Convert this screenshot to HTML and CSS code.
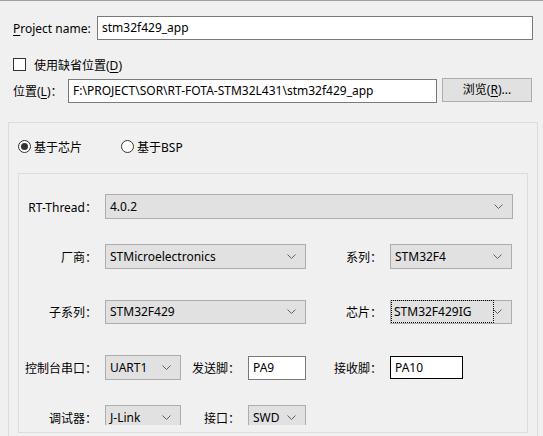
FILE: index.html
```html
<!DOCTYPE html>
<html lang="zh">
<head>
<meta charset="utf-8">
<title>New Project</title>
<link rel="stylesheet" href="styles.css">
</head>
<body>
<div class="window">
  <div class="row-name">
    <label class="lbl-name"><u>P</u>roject name:</label>
    <div class="input w-name">stm32f429_app</div>
  </div>
  <div class="row-check">
    <span class="checkbox"></span>
    <span class="check-text">使用缺省位置(<u>D</u>)</span>
  </div>
  <div class="row-path">
    <label class="lbl-path">位置(<u>L</u>)<span class="colon">：</span></label>
    <div class="input w-path">F:\PROJECT\SOR\RT-FOTA-STM32L431\stm32f429_app</div>
    <div class="button">浏览(<u>R</u>)...</div>
  </div>
  <div class="group">
    <div class="radios">
      <div class="radio-item first"><span class="radio checked"></span><span>基于芯片</span></div>
      <div class="radio-item"><span class="radio"></span><span>基于BSP</span></div>
    </div>
    <div class="panel">
      <div class="clip">
        <div class="frow r1">
          <span class="lab c1">RT-Thread<span class="colon">：</span></span>
          <div class="select w-rt"><span class="val">4.0.2</span><svg class="chev" width="9" height="5" viewBox="0 0 9 5"><polyline points="0.5,0.5 4.5,4.5 8.5,0.5" fill="none" stroke="#606060" stroke-width="1"/></svg></div>
        </div>
        <div class="frow r2">
          <span class="lab c1">厂商<span class="colon">：</span></span>
          <div class="select w-vendor"><span class="val">STMicroelectronics</span><svg class="chev" width="9" height="5" viewBox="0 0 9 5"><polyline points="0.5,0.5 4.5,4.5 8.5,0.5" fill="none" stroke="#606060" stroke-width="1"/></svg></div>
          <span class="lab c3">系列<span class="colon">：</span></span>
          <div class="select w-right"><span class="val">STM32F4</span><svg class="chev" width="9" height="5" viewBox="0 0 9 5"><polyline points="0.5,0.5 4.5,4.5 8.5,0.5" fill="none" stroke="#606060" stroke-width="1"/></svg></div>
        </div>
        <div class="frow r3">
          <span class="lab c1">子系列<span class="colon">：</span></span>
          <div class="select w-vendor"><span class="val">STM32F429</span><svg class="chev" width="9" height="5" viewBox="0 0 9 5"><polyline points="0.5,0.5 4.5,4.5 8.5,0.5" fill="none" stroke="#606060" stroke-width="1"/></svg></div>
          <span class="lab c3">芯片<span class="colon">：</span></span>
          <div class="select w-right focused"><span class="val focus">STM32F429IG</span><svg class="chev" width="9" height="5" viewBox="0 0 9 5"><polyline points="0.5,0.5 4.5,4.5 8.5,0.5" fill="none" stroke="#606060" stroke-width="1"/></svg></div>
        </div>
        <div class="frow r4">
          <span class="lab c1">控制台串口<span class="colon">：</span></span>
          <div class="select w-small"><span class="val">UART1</span><svg class="chev" width="9" height="5" viewBox="0 0 9 5"><polyline points="0.5,0.5 4.5,4.5 8.5,0.5" fill="none" stroke="#606060" stroke-width="1"/></svg></div>
          <span class="lab c2">发送脚<span class="colon">：</span></span>
          <div class="input w-pin">PA9</div>
          <span class="lab c3">接收脚<span class="colon">：</span></span>
          <div class="input w-pin2 dark">PA10</div>
        </div>
        <div class="frow r5">
          <span class="lab c1">调试器<span class="colon">：</span></span>
          <div class="select w-small"><span class="val">J-Link</span><svg class="chev" width="9" height="5" viewBox="0 0 9 5"><polyline points="0.5,0.5 4.5,4.5 8.5,0.5" fill="none" stroke="#606060" stroke-width="1"/></svg></div>
          <span class="lab c2">接口<span class="colon">：</span></span>
          <div class="select w-pin"><span class="val">SWD</span><svg class="chev" width="9" height="5" viewBox="0 0 9 5"><polyline points="0.5,0.5 4.5,4.5 8.5,0.5" fill="none" stroke="#606060" stroke-width="1"/></svg></div>
        </div>
      </div>
    </div>
  </div>
</div>
</body>
</html>
```

FILE: styles.css
```css
* { box-sizing: border-box; }
html, body { margin: 0; padding: 0; }
body {
  background: #f0f0f0;
  font-family: "Noto Sans", "Noto Sans CJK SC", sans-serif;
  font-size: 12px;
  color: #000;
}
u { text-decoration: underline; text-underline-offset: 2px; }
.colon { font-family: "Noto Sans CJK TC", sans-serif; }
.window {
  width: 543px;
  height: 436px;
  overflow: hidden;
  border-top: 1px solid #a0a0a0;
  background: #f0f0f0;
}
.input {
  height: 24px;
  background: #fff;
  border: 1px solid #7a7a7a;
  padding-left: 4px;
  line-height: 22px;
  white-space: nowrap;
  overflow: hidden;
}
.input.dark { border-color: #000; height: 23px; line-height: 21px; }
.row-name {
  display: flex;
  align-items: center;
  margin-top: 15px;
  padding-left: 13px;
}
.lbl-name { width: 84px; }
.w-name { width: 436px; }
.row-check {
  display: flex;
  align-items: center;
  margin-top: 18px;
  padding-left: 13px;
  height: 13px;
}
.checkbox {
  width: 13px;
  height: 13px;
  border: 1px solid #333;
  background: #fff;
}
.check-text { margin-left: 8px; }
.row-path {
  display: flex;
  align-items: flex-start;
  height: 25px;
  margin-top: 7px;
  padding-left: 13px;
}
.lbl-path { width: 55px; line-height: 24px; margin-top: 1px; white-space: nowrap; }
.w-path { width: 369px; margin-top: 1px; }
.button {
  width: 90px;
  height: 24px;
  margin-left: 5px;
  background: #e1e1e1;
  border: 1px solid #adadad;
  text-align: center;
  line-height: 22px;
}
.group {
  margin-top: 19px;
  margin-left: 8px;
  width: 530px;
  height: 320px;
  border: 1px solid #dcdcdc;
  border-bottom: none;
  padding-top: 17px;
  padding-left: 9px;
}
.radios { display: flex; height: 13px; align-items: center; }
.radio-item { display: flex; align-items: center; }
.radio-item.first { width: 103px; }
.radio {
  width: 13px;
  height: 13px;
  border: 1px solid #333;
  border-radius: 50%;
  background: #fff;
  margin-right: 3px;
  display: flex;
  align-items: center;
  justify-content: center;
}
.radio.checked::after {
  content: "";
  width: 7px;
  height: 7px;
  border-radius: 50%;
  background: #333;
}
.panel {
  margin-top: 20px;
  width: 510px;
  height: 260px;
  border: 1px solid #dcdcdc;
}
.clip {
  height: 251px;
  overflow: hidden;
  padding-top: 20px;
}
.frow { display: flex; align-items: center; height: 25px; }
.r2 { margin-top: 25px; }
.r3 { margin-top: 30px; }
.r4 { margin-top: 31px; }
.r5 { margin-top: 25px; }
.lab { text-align: right; white-space: nowrap; margin-right: 8px; }
.c1 { width: 78px; }
.c2 { width: 59px; }
.c3 { width: 76px; }
.select {
  height: 25px;
  background: #e1e1e1;
  border: 1px solid #adadad;
  display: flex;
  align-items: center;
  justify-content: space-between;
  padding-left: 3px;
  padding-right: 9px;
  white-space: nowrap;
}
.r3 .select { height: 24px; }
.val { line-height: 19px; padding: 0 1px; }
.focused { padding-left: 1px; }
.focus { outline: 1px dotted #000; width: 101px; height: 21px; line-height: 21px; padding-left: 2px; }
.chev { flex: none; }
.w-rt { width: 408px; }
.w-vendor { width: 201px; }
.w-right { width: 122px; }
.w-small { width: 76px; }
.w-pin { width: 58px; }
.w-pin2 { width: 73px; }
```
